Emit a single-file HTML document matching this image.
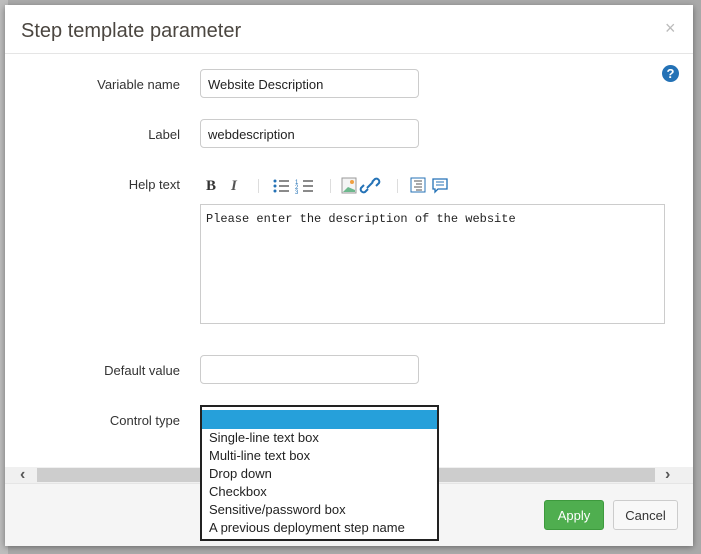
<!DOCTYPE html>
<html><head><style>
body{margin:0;width:701px;height:554px;overflow:hidden;background:#a9a9a9;font-family:"Liberation Sans",sans-serif;position:relative}
.bgtext{position:absolute;left:0;top:0;width:8px;height:554px;background:#bdbdbd}
.dlg{position:absolute;left:5px;top:5px;width:688px;height:540px;background:#fff;box-shadow:0 2px 6px rgba(0,0,0,.4)}
.hdr{height:48px;border-bottom:1px solid #e5e5e5}
.hdr h4{margin:0;position:absolute;left:16px;top:15px;font-size:20px;font-weight:normal;color:#4b4640}
.x{position:absolute;left:660px;top:13px;color:#bbb;font-size:18px}
.help{position:absolute;left:657px;top:60px;width:17px;height:17px;border-radius:50%;background:#2472b6;color:#fff;font-weight:bold;font-size:13px;text-align:center;line-height:17px}
.lbl{position:absolute;width:175px;text-align:right;font-size:13px;color:#333}
.inp{position:absolute;left:195px;height:29px;border:1px solid #ccc;border-radius:4px;font-size:13px;color:#222;line-height:29px;padding-left:7px;box-sizing:border-box;width:219px}
.ta{position:absolute;left:195px;top:199px;width:465px;height:120px;border:1px solid #ccc;box-sizing:border-box;font-family:"Liberation Mono",monospace;font-size:12px;padding:7px 5px;color:#222}
.tb{position:absolute;top:173px;font-size:15px;color:#333}
.scroll{position:absolute;left:0;top:462px;width:688px;height:16px;background:#f0f0f0}
.scroll .t{position:absolute;left:32px;right:38px;top:1px;height:14px;background:#cdcdcd}
.foot{position:absolute;left:0;top:478px;width:688px;height:62px;background:#f5f5f5;border-top:1px solid #e5e5e5}
.btn{position:absolute;top:16px;height:30px;border-radius:3px;font-size:13px;text-align:center;line-height:30px;box-sizing:border-box}
.dd{position:absolute;left:200px;top:405px;width:239px;height:136px;border:2px solid #222;background:#fff;box-sizing:border-box;font-size:13px;color:#222}
.dd div{height:18px;line-height:18px;padding-left:7px}
</style></head><body>
<div class="bgtext"></div>
<div class="dlg">
<div class="hdr"><h4>Step template parameter</h4><span class="x">×</span></div>
<div class="help">?</div>
<div class="lbl" style="top:72px">Variable name</div>
<div class="inp" style="top:64px">Website Description</div>
<div class="lbl" style="top:122px">Label</div>
<div class="inp" style="top:114px">webdescription</div>
<div class="lbl" style="top:172px">Help text</div>
<span class="tb" style="left:201px;font-weight:bold;font-family:'Liberation Serif',serif">B</span>
<span class="tb" style="left:226px;font-style:italic;font-family:'Liberation Serif',serif;font-weight:bold;color:#555">I</span>
<span style="position:absolute;left:253px;top:174px;width:1px;height:14px;background:#ddd"></span>
<svg style="position:absolute;left:268px;top:173px" width="40" height="16"><g fill="#2472b6"><circle cx="2" cy="3" r="1.5"/><circle cx="2" cy="8" r="1.5"/><circle cx="2" cy="13" r="1.5"/></g><g stroke="#444" stroke-width="1.3"><path d="M6 3h10M6 8h10M6 13h10M30 3h10M30 8h10M30 13h10"/></g><text x="22" y="6" font-size="6" fill="#2472b6">1</text><text x="22" y="11" font-size="6" fill="#2472b6">2</text><text x="22" y="16" font-size="6" fill="#2472b6">3</text></svg>
<span style="position:absolute;left:325px;top:174px;width:1px;height:14px;background:#ddd"></span>
<svg style="position:absolute;left:336px;top:172px" width="50" height="18"><rect x="1" y="1" width="14" height="15" fill="#f4f4f4" stroke="#999"/><path d="M2 15 L7 10 L14 13 V15Z" fill="#6db88d"/><circle cx="11" cy="5" r="2" fill="#f0a040"/><path d="M27 12 l-3 3 a3 3 0 0 1 -4 -4 l3 -3 M31 5 l3 -3 a3 3 0 0 1 4 4 l-3 3 M26 11 l6 -6" stroke="#2472b6" stroke-width="2" fill="none"/></svg>
<span style="position:absolute;left:392px;top:174px;width:1px;height:14px;background:#ddd"></span>
<svg style="position:absolute;left:405px;top:172px" width="40" height="18"><rect x="1" y="1" width="14" height="14" fill="none" stroke="#2472b6"/><path d="M4 4h8M6 7h6M4 10h8M6 13h6" stroke="#555"/><path d="M23 2h14v10h-9l-3 3v-3h-2z" fill="none" stroke="#2472b6" stroke-width="1.3"/><path d="M26 5h8M26 8h8" stroke="#2472b6"/></svg>
<div class="ta">Please enter the description of the website</div>
<div class="lbl" style="top:358px">Default value</div>
<div class="inp" style="top:350px"></div>
<div class="lbl" style="top:408px">Control type</div>
<div class="scroll"><span style="position:absolute;left:15px;top:-1px;color:#555;font-weight:bold">&lsaquo;</span><div class="t"></div><span style="position:absolute;left:660px;top:-1px;color:#555;font-weight:bold">&rsaquo;</span></div>
<div class="foot">
<div class="btn" style="left:539px;width:60px;background:#4fae4f;border:1px solid #3d9a3d;color:#fff">Apply</div>
<div class="btn" style="left:608px;width:65px;background:#f8f8f8;border:1px solid #ccc;color:#333">Cancel</div>
</div>
</div>
<div class="dd">
<div style="background:#26a0da;height:19px;margin-top:3px"></div>
<div>Single-line text box</div><div>Multi-line text box</div><div>Drop down</div><div>Checkbox</div><div>Sensitive/password box</div><div>A previous deployment step name</div>
</div>
</body></html>
